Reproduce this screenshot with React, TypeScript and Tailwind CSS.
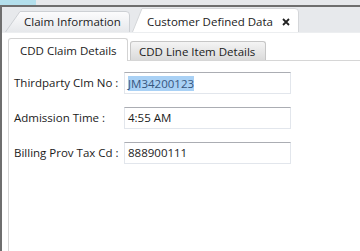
import React from "react";

const fields = [
    { label: "Thirdparty Clm No :", value: "JM34200123", selected: true },
    { label: "Admission Time :", value: "4:55 AM", selected: false },
    { label: "Billing Prov Tax Cd :", value: "888900111", selected: false },
];

function OuterTab({ label, active, width, height, textLeft, onClose }: {
    label: string;
    active?: boolean;
    width: number;
    height: number;
    textLeft: number;
    onClose?: boolean;
}) {
    const slant = active ? 10 : 15;
    return (
        <div className="relative shrink-0" style={{ width, height }}>
            {/* tab shape */}
            <svg className="absolute inset-0" width={width} height={height}>
                <defs>
                    <linearGradient id="inactiveTab" x1="0" y1="0" x2="0" y2="1">
                        <stop offset="0" stopColor="#fcfcfd" />
                        <stop offset="1" stopColor="#e6e8eb" />
                    </linearGradient>
                </defs>
                <path
                    d={`M0.5,${height} L${slant},0.5 H${width - 4} Q${width - 0.5},0.5 ${width - 0.5},4 V${height}`}
                    fill={active ? "#ffffff" : "url(#inactiveTab)"}
                    stroke={active ? "#d4d6d9" : "#cdd0d4"}
                />
            </svg>
            <div
                className="absolute bottom-0 h-[21px] pt-[1px] flex items-center text-[11.5px] text-[#1b1b1b]"
                style={{ left: textLeft }}
            >
                {label}
            </div>
            {onClose && (
                <div className="absolute bottom-0 h-[21px] pt-[1px] right-[9px] flex items-center">
                    <svg width="8" height="8" viewBox="0 0 8 8">
                        <path d="M1,1 L7,7 M7,1 L1,7" stroke="#222" strokeWidth="1.8" />
                    </svg>
                </div>
            )}
        </div>
    );
}

export default function App() {
    return (
        <div className="w-[360px] h-[251px] overflow-hidden bg-white flex flex-col font-['Open_Sans',sans-serif]">
            {/* window top edge */}
            <div className="h-[5px] bg-[#e6e8eb] flex shrink-0">
                <div className="w-[36px] bg-[#b3dfec]" />
            </div>
            <div className="h-[2px] bg-[#6e6e6e] shrink-0" />

            <div className="flex flex-1 min-h-0">
                <div className="w-[2px] bg-[#6e6e6e] shrink-0" />
                <div className="flex-1 flex flex-col">
                    {/* outer tab strip */}
                    <div className="h-[26px] bg-[#e7e9ec] flex items-end gap-[2px] pl-[3px] border-b border-[#eceef0] shrink-0">
                        <OuterTab label="Claim Information" width={125} height={21} textLeft={19} />
                        <OuterTab label="Customer Defined Data" active width={167} height={24} textLeft={15} onClose />
                    </div>

                    {/* content */}
                    <div className="flex-1 bg-white pl-[6px] pt-[5px] flex flex-col">
                        <div className="flex items-end h-[23px] shrink-0">
                            <div className="w-[120px] h-[23px] bg-white border border-b-0 border-[#d3d3d3] rounded-t-[3px] flex items-center pl-[11px] pt-[1px] text-[11.5px] text-[#1b1b1b] relative z-10">
                                CDD Claim Details
                            </div>
                            <div className="ml-[2px] w-[136px] h-[20px] bg-gradient-to-b from-[#f4f4f4] to-[#d9d9d9] border border-b-0 border-[#c6c6c6] rounded-t-[3px] flex items-center pl-[8px] text-[11.5px] text-[#1b1b1b]">
                                CDD Line Item Details
                            </div>
                        </div>
                        <div className="flex-1 border-t border-l border-[#d6d6d6] -mt-px pl-[5px] pt-[11px]">
                            <div className="grid grid-cols-[110px_167px] gap-y-[13px] items-center">
                                {fields.map((f) => (
                                    <React.Fragment key={f.label}>
                                        <div className="text-[11.5px] text-[#1b1b1b] whitespace-nowrap">{f.label}</div>
                                        <div className="h-[22px] border border-[#e2e6ec] border-t-[#abadb3] flex items-center pl-[3px] text-[11.5px] text-[#1b1b1b]">
                                            {f.selected ? (
                                                <span className="bg-[#a9d1f5] text-[#36557e] leading-[15px]">{f.value}</span>
                                            ) : (
                                                <span>{f.value}</span>
                                            )}
                                        </div>
                                    </React.Fragment>
                                ))}
                            </div>
                        </div>
                    </div>
                </div>
            </div>
        </div>
    );
}
